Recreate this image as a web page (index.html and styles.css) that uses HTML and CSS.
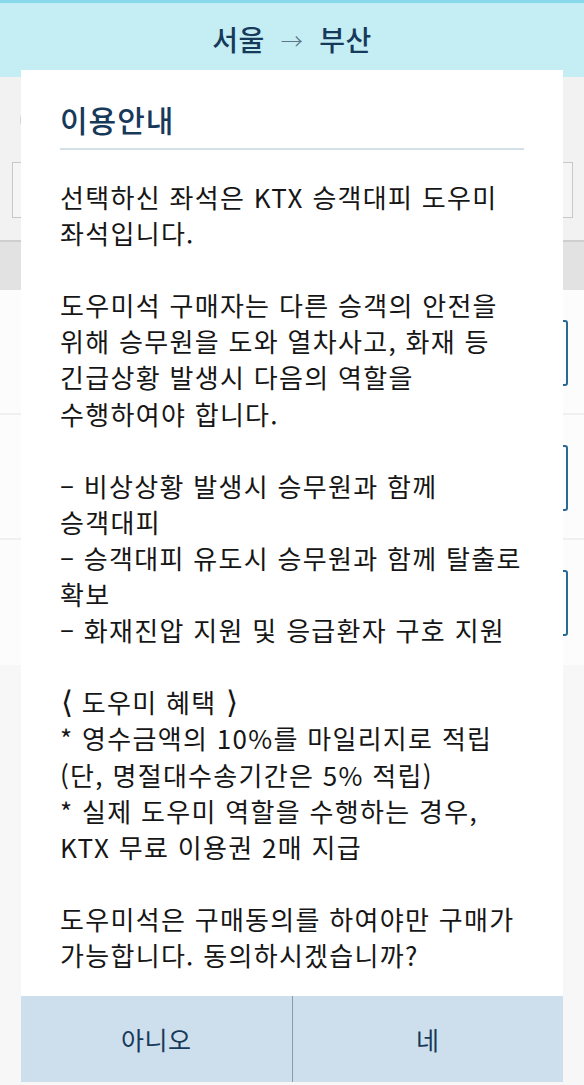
FILE: index.html
```html
<!DOCTYPE html>
<html lang="ko">
<head>
<meta charset="utf-8">
<title>이용안내</title>
<link rel="stylesheet" href="styles.css">
</head>
<body>
<div class="page">
  <header class="header">
    <div class="route"><span>서울</span><span class="arrow">→</span><span>부산</span></div>
  </header>
  <section class="search">
    <div class="icon-row"><span class="dot left"></span><span class="dot right"></span></div>
    <div class="inputbox"></div>
  </section>
  <div class="band"></div>
  <div class="rows">
    <div class="row"><div class="card"></div></div>
    <div class="row"><div class="card"></div></div>
    <div class="row"><div class="card"></div></div>
  </div>
  <div class="rest"></div>

  <div class="modal">
    <h2 class="modal-title">이용안내</h2>
    <div class="modal-body">
      <p>선택하신 좌석은 KTX 승객대피 도우미<br>좌석입니다.</p>
      <p>도우미석 구매자는 다른 승객의 안전을<br>위해 승무원을 도와 열차사고, 화재 등<br>긴급상황 발생시 다음의 역할을<br>수행하여야 합니다.</p>
      <p>– 비상상황 발생시 승무원과 함께<br>승객대피<br>– 승객대피 유도시 승무원과 함께 탈출로<br>확보<br>– 화재진압 지원 및 응급환자 구호 지원</p>
      <p><span class="ang">⟨</span> 도우미 혜택 <span class="ang">⟩</span><br>* 영수금액의 10%를 마일리지로 적립<br>(단, 명절대수송기간은 5% 적립)<br>* 실제 도우미 역할을 수행하는 경우,<br>KTX 무료 이용권 2매 지급</p>
      <p>도우미석은 구매동의를 하여야만 구매가<br>가능합니다. 동의하시겠습니까?</p>
    </div>
    <div class="modal-buttons">
      <button class="btn">아니오</button>
      <button class="btn">네</button>
    </div>
  </div>
</div>
</body>
</html>
```

FILE: styles.css
```css
* { box-sizing: border-box; }
html, body { margin: 0; padding: 0; }
body {
  font-family: "Noto Sans CJK KR", "Noto Sans", sans-serif;
  background: #f8f8f8;
  width: 584px;
  height: 1085px;
  overflow: hidden;
}
.page {
  position: relative;
  width: 584px;
  height: 1085px;
  display: flex;
  flex-direction: column;
}
.header {
  height: 77px;
  flex: none;
  background: #c5edf4;
  border-top: 3px solid #86d8ea;
  display: flex;
  align-items: center;
  justify-content: center;
  padding-bottom: 2px;
}
.route {
  display: flex;
  gap: 16px;
  align-items: center;
  font-size: 28px;
  letter-spacing: 0.5px;
  color: #163a5a;
  font-weight: 500;
}
.route .arrow {
  font-weight: 300;
  color: #5d7689;
  font-size: 22px;
}
.search {
  height: 163px;
  flex: none;
  background: #f2f2f2;
  padding: 0 11px 0 12px;
  display: flex;
  flex-direction: column;
}
.icon-row {
  height: 85px;
  display: flex;
  justify-content: space-between;
  align-items: center;
  padding: 0 12px 0 8px;
}
.dot {
  width: 26px;
  height: 26px;
  border-radius: 50%;
  border: 2px solid #d0d0d0;
}
.dot.right { border-color: #1b4a70; }
.inputbox {
  height: 56px;
  background: #f5f5f5;
  border: 1.5px solid #c8c8c8;
}
.band {
  height: 50px;
  flex: none;
  background: #e2e2e2;
  border-top: 2px solid #cfcfcf;
}
.rows { flex: none; background: #fcfcfc; }
.row {
  height: 125px;
  border-bottom: 2px solid #f0f0f0;
  padding: 30px 16px 0 30px;
}
.row:last-child { border-bottom: none; }
.card {
  height: 66px;
  border: 2px solid #2a6896;
  border-radius: 3px;
}
.rest { flex: 1; background: #f7f7f7; }

.modal {
  position: absolute;
  left: 21px;
  top: 70px;
  width: 542px;
  height: 1012px;
  background: #ffffff;
  display: flex;
  flex-direction: column;
}
.modal-title {
  margin: 0 39px;
  padding: 29px 0 9px 0;
  font-size: 30px;
  line-height: 40px;
  letter-spacing: 1px;
  font-weight: 500;
  color: #17395a;
  border-bottom: 2px solid #d3e0e8;
}
.modal-body {
  flex: 1;
  padding: 29px 39px 0 39px;
  font-size: 26px;
  letter-spacing: 1.3px;
  line-height: 36.1px;
  color: #161616;
  white-space: nowrap;
}
.modal-body p { margin: 0 0 36.1px 0; }
.modal-body p:last-child { margin-bottom: 0; }
.modal-body .ang {
  font-family: "DejaVu Sans", sans-serif;
  font-size: 31px;
  line-height: 0;
  letter-spacing: 0;
  margin-left: 1px;
}
.modal-buttons {
  height: 86px;
  flex: none;
  display: flex;
  background: #cddfec;
}
.btn {
  flex: 1;
  border: none;
  background: transparent;
  font-family: inherit;
  font-size: 25px;
  letter-spacing: 0.5px;
  color: #17395a;
  padding: 0;
}
.btn + .btn { border-left: 1.5px solid #8c9ba7; }
```
